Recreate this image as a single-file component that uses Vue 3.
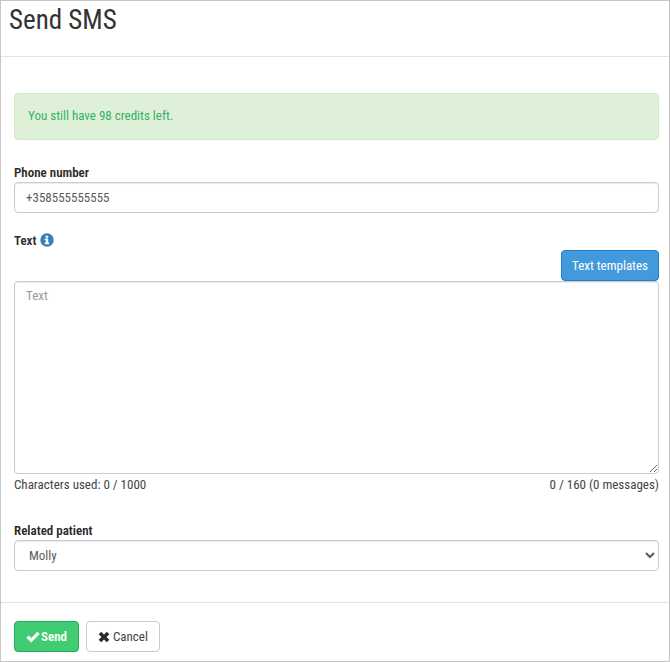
<script setup>
import { computed, ref } from 'vue'

const credits = ref(98)
const phone = ref('+358555555555')
const message = ref('')
const patient = ref('Molly')
const maxLength = 1000
const partLength = 160
const parts = computed(() => Math.ceil(message.value.length / partLength))
</script>

<template>
  <form class="dialog" @submit.prevent>
    <header class="head">
      <h1>Send SMS</h1>
    </header>

    <main class="body">
      <div class="alert" role="status">You still have {{ credits }} credits left.</div>

      <div class="group">
        <label for="phone">Phone number</label>
        <input id="phone" v-model="phone" class="control" type="tel" />
      </div>

      <div class="group message">
        <div class="label-row">
          <label for="message">Text</label>
          <svg class="info" viewBox="0 0 14 14" aria-hidden="true">
            <circle cx="7" cy="7" r="6.7" fill="#337ebd" />
            <path d="M5.6 2.8h2.6v1.9H5.6zM4.7 5.5h3.5v4.1h1v1.6H4.7V9.6h1V7.1h-1z" fill="#fff" />
          </svg>
        </div>
        <div class="tools">
          <button type="button" class="btn primary">Text templates</button>
        </div>
        <textarea id="message" v-model="message" class="control area" placeholder="Text" :maxlength="maxLength"></textarea>
        <div class="counts">
          <span>Characters used: {{ message.length }} / {{ maxLength }}</span>
          <span>{{ message.length }} / {{ partLength }} ({{ parts }} messages)</span>
        </div>
      </div>

      <div class="group">
        <label for="patient">Related patient</label>
        <select id="patient" v-model="patient" class="control picker">
          <option>Molly</option>
        </select>
      </div>
    </main>

    <footer class="foot">
      <button type="submit" class="btn success">
        <svg class="check" viewBox="0 0 14 12" aria-hidden="true">
          <path d="M0.3 6.8 2.7 4.4 5.3 6.9 11.4 0.8 13.7 3.1 5.3 11.5z" fill="#fff" />
        </svg>
        <span>Send</span>
      </button>
      <button type="button" class="btn plain">
        <svg class="cross" viewBox="0 0 12 12" aria-hidden="true">
          <path d="M3.2 0.8 6 3.5 8.8 0.8 11.3 3.2 8.5 6 11.3 8.8 8.8 11.2 6 8.5 3.2 11.2 0.7 8.8 3.5 6 0.7 3.2z" fill="#2b2b2b" />
        </svg>
        <span>Cancel</span>
      </button>
    </footer>
  </form>
</template>

<style>
body {
  margin: 0;
  background: #fff;
}
</style>

<style scoped>
.dialog,
.dialog * {
  box-sizing: border-box;
}
.dialog {
  display: flex;
  flex-direction: column;
  min-height: 100vh;
  border: 1px solid #c6c6c6;
  color: #444;
  font-family: "Roboto Condensed", "Liberation Sans Narrow", Roboto, sans-serif;
  font-size: 13px;
  line-height: 20px;
}
.head {
  padding: 2px 8px 18px;
  border-bottom: 1px solid #e2e2e2;
}
h1 {
  margin: 0;
  color: #333;
  font-size: 27px;
  font-weight: 400;
  line-height: 35px;
}
.body {
  display: flex;
  flex-direction: column;
  flex: 1;
  padding: 36px 10px 0 13px;
}
.alert {
  margin-bottom: 23px;
  padding: 12px 13px 13px;
  border: 1px solid #d3e8c6;
  border-radius: 4px;
  background: #dff0d8;
  color: #35b068;
}
.group {
  display: flex;
  flex-direction: column;
  margin-bottom: 18px;
}
label {
  color: #2b2b2b;
  font-weight: 600;
  line-height: 19px;
}
.control {
  width: 100%;
  height: 31px;
  margin: 0;
  padding: 4px 11px;
  border: 1px solid #ccc;
  border-radius: 4px;
  background: #fff;
  box-shadow: inset 0 1px 1px rgba(0, 0, 0, 0.08);
  color: #5c5c5c;
  font: inherit;
}
.picker {
  padding: 4px 10px;
}
.label-row {
  display: flex;
  align-items: flex-start;
  gap: 4px;
}
.info {
  width: 14px;
  height: 14px;
  margin-top: 2px;
}
.tools {
  display: flex;
  justify-content: flex-end;
}
.message {
  margin-bottom: 26px;
}
.area {
  display: block;
  height: 193px;
  resize: vertical;
}
.area::placeholder {
  color: #999;
}
.counts {
  display: flex;
  justify-content: space-between;
  padding-top: 1px;
}
.btn {
  display: flex;
  align-items: center;
  height: 31px;
  margin: 0;
  padding: 0 10px;
  border: 1px solid #ccc;
  border-radius: 4px;
  background: #fff;
  color: #444;
  font: inherit;
}
.primary {
  border-color: #1f80c8;
  background: #4299dc;
  color: #fff;
}
.success {
  gap: 1px;
  padding: 0 11px;
  border-color: #29a95b;
  background: #3fcc72;
  color: #fff;
  font-weight: 600;
}
.plain {
  gap: 3px;
  padding: 0 11px;
}
.check {
  width: 14px;
  height: 12px;
}
.cross {
  width: 12px;
  height: 12px;
}
.foot {
  display: flex;
  gap: 7px;
  padding: 18px 13px 9px;
  border-top: 1px solid #e2e2e2;
}
</style>
